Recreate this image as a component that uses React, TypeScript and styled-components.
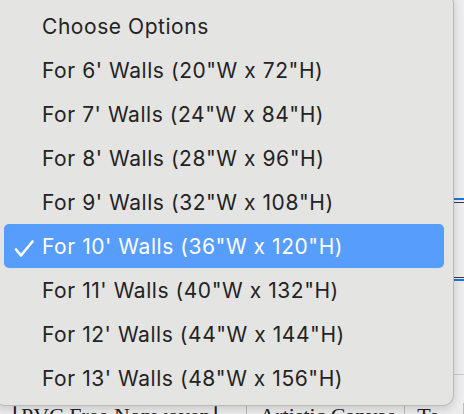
import React from "react";
import styled, { createGlobalStyle } from "styled-components";

const GlobalStyle = createGlobalStyle`
  html, body { margin: 0; padding: 0; }
  body { background: #ededed; overflow: hidden; }
`;

const Page = styled.div`
  position: relative;
  width: 464px;
  height: 414px;
  overflow: hidden;
  background: #ededed;
  font-family: "Liberation Serif", serif;
`;

const Backdrop = styled.div`
  display: flex;
  flex-direction: column;
  height: 100%;
  & > * { flex-shrink: 0; }
`;

const SelectBox = styled.div`
  margin-top: 198px;
  height: 83px;
  box-sizing: border-box;
  border-top: 2px solid #1a73e8;
  border-bottom: 2px solid #1a73e8;
  box-shadow: inset 0 2px 0 0 #ededed, inset 0 3px 0 0 #3a3a3a,
    inset 0 -1px 0 0 #ededed, inset 0 -2px 0 0 #3a3a3a;
`;

const Divider = styled.div`
  margin-top: 93px;
  height: 1px;
  background: #c8c8c8;
`;

const OptionRow = styled.div`
  display: flex;
  margin-top: 28px;
  font-size: 22px;
  color: #222;
  line-height: 26px;
`;

const OptionCell = styled.div<{ $w: number }>`
  width: ${(p) => p.$w}px;
  padding-left: 12px;
  box-sizing: border-box;
  border-right: 1px solid #bdbdbd;
  white-space: nowrap;
`;

const Menu = styled.div`
  position: absolute;
  left: -6px;
  top: -8px;
  width: 460px;
  height: 414px;
  box-sizing: border-box;
  padding: 11px 9px 7px;
  background: #e4e4e3;
  border: 1px solid #b9b9b9;
  border-radius: 11px;
  box-shadow: 0 3px 10px rgba(0, 0, 0, 0.16);
  display: flex;
  flex-direction: column;
  font-family: Inter, "Liberation Sans", sans-serif;
`;

const Item = styled.div<{ $selected?: boolean }>`
  position: relative;
  height: 44px;
  flex: 0 0 44px;
  display: flex;
  align-items: center;
  padding-left: 38px;
  border-radius: 5px;
  font-size: 21px;
  letter-spacing: 0.55px;
  color: ${(p) => (p.$selected ? "#ffffff" : "#232323")};
  background: ${(p) => (p.$selected ? "#579dfb" : "transparent")};
  white-space: nowrap;
`;

const Check = styled.svg`
  position: absolute;
  left: 10px;
  top: 16px;
  width: 20px;
  height: 17px;
`;

const items = [
  "Choose Options",
  `For 6' Walls (20"W x 72"H)`,
  `For 7' Walls (24"W x 84"H)`,
  `For 8' Walls (28"W x 96"H)`,
  `For 9' Walls (32"W x 108"H)`,
  `For 10' Walls (36"W x 120"H)`,
  `For 11' Walls (40"W x 132"H)`,
  `For 12' Walls (44"W x 144"H)`,
  `For 13' Walls (48"W x 156"H)`,
];

export default function App() {
  return (
    <>
      <GlobalStyle />
      <Page>
        <Backdrop>
          <SelectBox />
          <Divider />
          <OptionRow>
            <OptionCell $w={254}>⌊PVC Free Nonwoven⌋</OptionCell>
            <OptionCell $w={162}>Artistic Canvas</OptionCell>
            <OptionCell $w={60}>Te</OptionCell>
          </OptionRow>
        </Backdrop>
        <Menu>
          {items.map((t, i) => (
            <Item key={t} $selected={i === 5}>
              {i === 5 && (
                <Check viewBox="0 0 20 17">
                  <path
                    d="M2 9.5 L7 15.5 L18.5 1.5"
                    fill="none"
                    stroke="#fff"
                    strokeWidth="2.6"
                    strokeLinecap="round"
                    strokeLinejoin="round"
                  />
                </Check>
              )}
              {t}
            </Item>
          ))}
        </Menu>
      </Page>
    </>
  );
}
